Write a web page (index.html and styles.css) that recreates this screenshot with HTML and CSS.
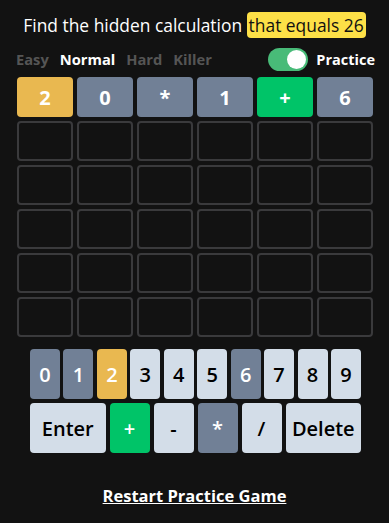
FILE: index.html
```html
<!DOCTYPE html>
<html lang="en">
<head>
    <meta charset="UTF-8">
    <title>Calculation Game</title>
    <link rel="stylesheet" href="styles.css">
</head>
<body>
    <div class="app">
        <div class="title">
            Find the hidden calculation <span class="target">that equals 26</span>
        </div>

        <div class="options">
            <div class="levels">
                <span class="level">Easy</span>
                <span class="level active">Normal</span>
                <span class="level">Hard</span>
                <span class="level">Killer</span>
            </div>
            <div class="practice">
                <span class="switch on"><span class="knob"></span></span>
                <span class="practice-label">Practice</span>
            </div>
        </div>

        <div class="board" id="board"></div>

        <div class="keyboard">
            <div class="key-row digits">
                <button class="key grey">0</button>
                <button class="key grey">1</button>
                <button class="key yellow">2</button>
                <button class="key">3</button>
                <button class="key">4</button>
                <button class="key">5</button>
                <button class="key grey">6</button>
                <button class="key">7</button>
                <button class="key">8</button>
                <button class="key">9</button>
            </div>
            <div class="key-row ops">
                <button class="key wide">Enter</button>
                <button class="key green op">+</button>
                <button class="key op">-</button>
                <button class="key grey op">*</button>
                <button class="key op">/</button>
                <button class="key wide">Delete</button>
            </div>
        </div>

        <a class="restart" href="#">Restart Practice Game</a>
    </div>

    <script>
        const guesses = [
            [['2', 'yellow'], ['0', 'grey'], ['*', 'grey'], ['1', 'grey'], ['+', 'green'], ['6', 'grey']]
        ];

        const board = document.getElementById('board');

        // 6 rows of 6 cells, filled rows first
        for (let r = 0; r < 6; r++) {
            for (let c = 0; c < 6; c++) {
                const cell = document.createElement('div');
                cell.className = 'cell';
                if (guesses[r]) {
                    cell.textContent = guesses[r][c][0];
                    cell.className = 'cell filled ' + guesses[r][c][1];
                }
                board.appendChild(cell);
            }
        }
    </script>
</body>
</html>
```

FILE: styles.css
```css
body {
    margin: 0;
    background-color: #121212;
    color: #ffffff;
    font-family: "Open Sans", Lato, sans-serif;
}

.app {
    width: 389px;
    padding-top: 14px;
}

.title {
    text-align: center;
    font-size: 17.4px;
    line-height: 23px;
    height: 23px;
    white-space: nowrap;
}

.target {
    background-color: #fde047;
    color: #111111;
    border-radius: 4px;
    padding: 1px 2px;
}

.options {
    display: flex;
    justify-content: space-between;
    align-items: center;
    margin: 9px 14px 0 16px;
    height: 26px;
}

.levels {
    display: flex;
    gap: 11px;
}

.level {
    font-size: 14.7px;
    font-weight: bold;
    color: #555555;
}

.level.active {
    color: #ffffff;
}

.practice {
    display: flex;
    align-items: center;
    gap: 8px;
}

.switch {
    width: 40px;
    height: 23px;
    border-radius: 12px;
    background-color: #444444;
    display: flex;
    align-items: center;
    padding: 0 2px;
    box-sizing: border-box;
}

.switch.on {
    background-color: #48bb78;
    justify-content: flex-end;
}

.knob {
    width: 19px;
    height: 19px;
    border-radius: 50%;
    background-color: #ffffff;
}

.practice-label {
    font-size: 14.5px;
    font-weight: bold;
}

.board {
    display: grid;
    grid-template-columns: repeat(6, 56px);
    grid-auto-rows: 40px;
    gap: 4px;
    margin: 5px 0 0 17px;
}

.cell {
    border: 2px solid #3a3a3c;
    border-radius: 4px;
    box-sizing: border-box;
}

.cell.filled {
    border: none;
    display: flex;
    align-items: center;
    justify-content: center;
    font-size: 20px;
    font-weight: bold;
    color: #ffffff;
}

.cell.yellow {
    background-color: #e9b850;
}

.cell.grey {
    background-color: #718096;
}

.cell.green {
    background-color: #00c468;
}

.keyboard {
    margin: 12px 0 0 30px;
    width: 331px;
}

.key-row {
    display: flex;
    gap: 3.4px;
}

.key-row.ops {
    gap: 4px;
    margin-top: 4px;
}

.key {
    height: 50px;
    flex: 1;
    border: none;
    border-radius: 4px;
    background-color: #d3dde8;
    color: #000000;
    font-family: "Open Sans", Lato, sans-serif;
    font-size: 20px;
    font-weight: 600;
    padding: 0;
}

.key.op {
    flex: 0 0 40px;
}

.key.wide {
    flex: 1;
}

.key.grey {
    background-color: #718096;
    color: #ffffff;
}

.key.yellow {
    background-color: #e9b850;
    color: #ffffff;
}

.key.green {
    background-color: #00c468;
    color: #ffffff;
}

.restart {
    display: block;
    width: max-content;
    margin: 31px auto 0;
    color: #ffffff;
    font-size: 16.5px;
    font-weight: bold;
    font-family: "Open Sans", sans-serif;
}
```
